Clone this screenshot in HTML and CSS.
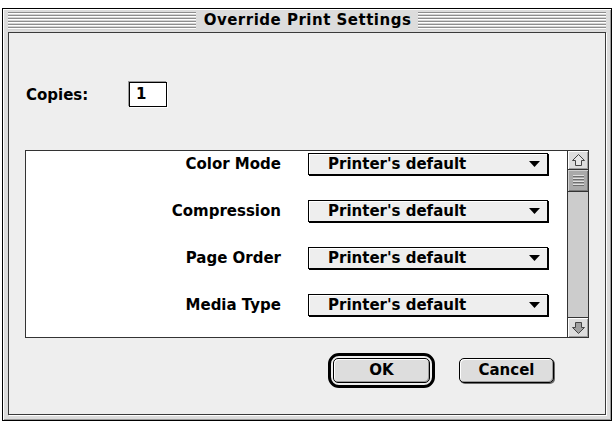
FILE: index.html
```html
<!DOCTYPE html>
<html>
<head>
<meta charset="utf-8">
<link rel="stylesheet" href="styles.css">
</head>
<body>
<div class="window">
  <div class="titlebar">
    <div class="stripes"></div>
    <div class="title">Override Print Settings</div>
    <div class="stripes"></div>
  </div>
  <div class="content">
    <div class="copies-row">
      <span class="copies-label">Copies:</span>
      <div class="field">1</div>
    </div>
    <div class="list">
      <div class="rows">
        <div class="row">
          <span class="row-label">Color Mode</span>
          <div class="popup"><span>Printer's default</span><svg class="tri" width="11" height="6" viewBox="0 0 11 6"><path d="M0 0H11L5.5 6Z"/></svg></div>
        </div>
        <div class="row">
          <span class="row-label">Compression</span>
          <div class="popup"><span>Printer's default</span><svg class="tri" width="11" height="6" viewBox="0 0 11 6"><path d="M0 0H11L5.5 6Z"/></svg></div>
        </div>
        <div class="row">
          <span class="row-label">Page Order</span>
          <div class="popup"><span>Printer's default</span><svg class="tri" width="11" height="6" viewBox="0 0 11 6"><path d="M0 0H11L5.5 6Z"/></svg></div>
        </div>
        <div class="row">
          <span class="row-label">Media Type</span>
          <div class="popup"><span>Printer's default</span><svg class="tri" width="11" height="6" viewBox="0 0 11 6"><path d="M0 0H11L5.5 6Z"/></svg></div>
        </div>
      </div>
      <div class="scrollbar">
        <div class="arrow arrow-up">
          <svg width="13" height="12" viewBox="0 0 13 12"><path class="arr-up" d="M6.5 0.5L12.5 6.5H9.5V11.5H3.5V6.5H0.5Z"/></svg>
        </div>
        <div class="thumb"><div class="grip"></div></div>
        <div class="track"></div>
        <div class="arrow arrow-down">
          <svg width="13" height="12" viewBox="0 0 13 12"><path class="arr-down" d="M6.5 11.5L12.5 5.5H9.5V0.5H3.5V5.5H0.5Z"/></svg>
        </div>
      </div>
    </div>
    <div class="buttons">
      <div class="default-ring"><div class="btn btn-ok">OK</div></div>
      <div class="btn btn-cancel">Cancel</div>
    </div>
  </div>
</div>
</body>
</html>
```

FILE: styles.css
```css
* { box-sizing: border-box; }

html, body {
  margin: 0;
  padding: 0;
  background: #ffffff;
}

body {
  font-family: "DejaVu Sans", "Liberation Sans", sans-serif;
  font-weight: bold;
  font-size: 15px;
  color: #000;
}

.window {
  margin: 8px 2px 2px 2px;
  width: 610px;
  height: 413px;
  border: 1px solid #000;
  background: #dcdcdc;
  box-shadow: inset 1px 1px 0 #ffffff, inset -1px -1px 0 #9a9a9a;
  padding: 0 5px 5px 5px;
  display: flex;
  flex-direction: column;
}

.titlebar {
  height: 23px;
  display: flex;
  align-items: center;
  padding: 0 0 0 0;
}

.stripes {
  flex: 1;
  height: 18px;
  background: repeating-linear-gradient(to bottom, #8e8e8e 0 1px, #ffffff 1px 2px, #d4d4d4 2px 3px);
}

.title {
  padding: 0 7px 0 8px;
  letter-spacing: 0.5px;
  line-height: 23px;
  white-space: nowrap;
}

.content {
  flex: 1;
  background: #eeeeee;
  border: 1px solid #3a3a3a;
  box-shadow: 1px 1px 0 #ffffff;
  padding: 49px 16px 0 16px;
  display: flex;
  flex-direction: column;
}

.copies-row {
  display: flex;
  align-items: center;
  height: 25px;
}

.copies-label {
  width: 104px;
  padding-left: 1px;
}

.field {
  width: 38px;
  height: 25px;
  border: 1px solid #000;
  background: #ffffff;
  box-shadow: -1px -1px 0 #9a9a9a, 1px 1px 0 #ffffff;
  padding-left: 6px;
  line-height: 23px;
  font-weight: bold;
}

.list {
  margin-top: 43px;
  height: 188px;
  border: 1px solid #333;
  background: #ffffff;
  display: flex;
}

.rows {
  flex: 1;
  padding-top: 1px;
  display: flex;
  flex-direction: column;
  gap: 24px;
}

.row {
  display: flex;
  align-items: center;
  height: 23px;
}

.row-label {
  width: 255px;
  text-align: right;
}

.popup {
  margin-left: 27px;
  width: 240px;
  height: 22px;
  border: 1px solid #000;
  background: #eeeeee;
  box-shadow: inset 1px 1px 0 #ffffff, 1px 1px 0 #000;
  display: flex;
  align-items: center;
  justify-content: space-between;
  padding: 0 7px 0 19px;
}

.popup span {
  line-height: 20px;
}

.tri path { fill: #000; }

.scrollbar {
  width: 21px;
  border-left: 1px solid #333;
  display: flex;
  flex-direction: column;
  background: #cccccc;
}

.arrow {
  background: #dddddd;
  display: flex;
  align-items: center;
  justify-content: center;
  box-shadow: inset 1px 1px 0 #ffffff, inset -1px -1px 0 #9f9f9f;
}

.arrow-up {
  height: 19px;
  border-bottom: 1px solid #333;
}

.arrow-down {
  height: 20px;
  border-top: 1px solid #333;
}

.arr-up {
  fill: #e6e6e6;
  stroke: #444;
  stroke-width: 1;
}

.arr-down {
  fill: #a0a0a0;
  stroke: #444;
  stroke-width: 1;
}

.thumb {
  height: 22px;
  border-bottom: 1px solid #333;
  background: #a9a9a9;
  box-shadow: inset 1px 1px 0 #d0d0d0, inset -1px -1px 0 #7a7a7a;
  display: flex;
  align-items: center;
  justify-content: center;
}

.grip {
  width: 11px;
  height: 11px;
  background: repeating-linear-gradient(to bottom, #e0e0e0 0 1px, #6e6e6e 1px 2px, transparent 2px 3px);
}

.track {
  flex: 1;
  background: #cccccc;
}

.buttons {
  margin-top: 15px;
  display: flex;
  justify-content: flex-end;
  align-items: center;
  gap: 24px;
  padding-right: 35px;
}

.default-ring {
  border: 3px solid #000;
  border-radius: 11px;
  padding: 2px;
}

.btn {
  height: 25px;
  border: 1px solid #000;
  border-radius: 5px;
  background: #dddddd;
  box-shadow: inset 1px 1px 0 #ffffff, inset -1px -1px 0 #9a9a9a;
  display: flex;
  align-items: center;
  justify-content: center;
  line-height: 23px;
}

.btn-ok {
  width: 97px;
}

.btn-cancel {
  width: 95px;
  box-shadow: inset 1px 1px 0 #ffffff, inset -1px -1px 0 #9a9a9a, 1px 1px 0 #6a6a6a;
}
```
